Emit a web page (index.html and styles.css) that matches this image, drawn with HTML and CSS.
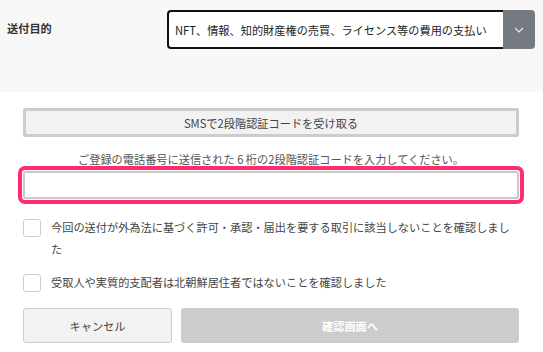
FILE: index.html
```html
<!DOCTYPE html>
<html lang="ja">
<head>
    <meta charset="UTF-8">
    <meta name="viewport" content="width=device-width, initial-scale=1.0">
    <title>送付確認</title>
    <link rel="stylesheet" href="styles.css">
</head>
<body>
    <div class="purpose">
        <div class="purpose-label">送付目的</div>
        <div class="select">
            <div class="select-value">NFT、情報、知的財産権の売買、ライセンス等の費用の支払い</div>
            <div class="select-arrow">
                <svg width="10" height="6" viewBox="0 0 10 6"><path d="M1 1l4 4 4-4" fill="none" stroke="#e6e8ea" stroke-width="1.2"/></svg>
            </div>
        </div>
    </div>

    <div class="form">
        <button class="sms-btn">SMSで2段階認証コードを受け取る</button>
        <p class="hint">ご登録の電話番号に送信された 6 桁の2段階認証コードを入力してください。</p>
        <input type="text" class="code-input">

        <label class="check">
            <span class="box"></span>
            <span class="check-text">今回の送付が外為法に基づく許可・承認・届出を要する取引に該当しないことを確認しました</span>
        </label>
        <label class="check check-second">
            <span class="box"></span>
            <span class="check-text">受取人や実質的支配者は北朝鮮居住者ではないことを確認しました</span>
        </label>

        <div class="actions">
            <button class="cancel-btn">キャンセル</button>
            <button class="confirm-btn">確認画面へ</button>
        </div>
    </div>
</body>
</html>
```

FILE: styles.css
```css
body {
    margin: 0;
    font-family: "Noto Sans CJK JP", "Noto Sans", sans-serif;
    font-size: 11.2px;
    color: #444;
    background: white;
}

.purpose {
    display: flex;
    background: #f8f8f8;
    height: 92px;
    padding: 10px 8px 0 7px;
    box-sizing: border-box;
}

.purpose-label {
    width: 160px;
    font-weight: bold;
    color: #333;
    margin-top: 10px;
}

.select {
    flex: 1;
    display: flex;
    height: 39px;
}

.select-value {
    flex: 1;
    border: 2px solid #111;
    border-right: none;
    border-radius: 4px 0 0 4px;
    background: white;
    color: #222;
    padding: 0 6px;
    display: flex;
    align-items: center;
}

.select-arrow {
    width: 32px;
    background: #757b81;
    border-radius: 0 4px 4px 0;
    display: flex;
    align-items: center;
    justify-content: center;
}

.form {
    padding: 16px 24px 0 23px;
}

button {
    font-family: inherit;
    font-size: 11.2px;
    cursor: pointer;
}

.sms-btn {
    display: block;
    width: 100%;
    height: 29px;
    background: #f2f2f2;
    border: 3px solid #ccc;
    border-radius: 2px;
    color: #444;
    padding: 0;
}

.hint {
    margin: 14px 0 4px;
    text-align: center;
    color: #555;
    line-height: 16px;
}

.code-input {
    display: block;
    width: 100%;
    height: 28px;
    box-sizing: border-box;
    border: 2px solid #c9c9c9;
    border-radius: 2px;
    outline: 4px solid #ff2d6d;
    outline-offset: 1px;
}

.check {
    display: flex;
    align-items: flex-start;
    gap: 10px;
    margin-top: 17px;
    line-height: 22px;
}

.check-second {
    margin-top: 11px;
}

.box {
    flex: none;
    width: 16px;
    height: 16px;
    border: 1px solid #ccc;
    border-radius: 3px;
    margin-top: 3px;
}

.actions {
    display: flex;
    gap: 9px;
    margin-top: 15px;
}

.cancel-btn {
    width: 149px;
    height: 35px;
    background: #f2f2f2;
    border: 1px solid #ccc;
    border-radius: 3px;
    color: #444;
}

.confirm-btn {
    flex: 1;
    height: 35px;
    background: #ccc;
    border: none;
    border-radius: 3px;
    color: white;
    font-weight: bold;
}
```
